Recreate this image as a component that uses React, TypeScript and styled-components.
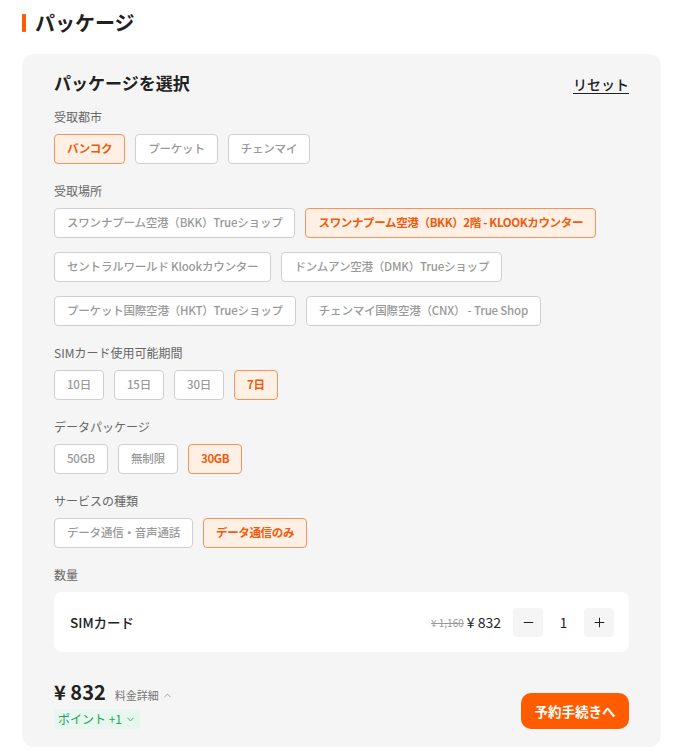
import styled, { createGlobalStyle } from "styled-components"
import { ChevronDown, ChevronUp, Minus, Plus } from "lucide-react"

const GlobalStyle = createGlobalStyle`
  body {
    margin: 0;
    background: #fff;
    font-family: "Noto Sans CJK JP", "Noto Sans", sans-serif;
    color: #212121;
  }
`

const Page = styled.div`
  padding: 12px 18px 8px 22px;
`

const Heading = styled.h2`
  display: flex;
  align-items: center;
  gap: 9px;
  margin: 0 0 20px;
  font-size: 20px;
  line-height: 22px;
  font-weight: 700;
  color: #212121;

  &::before {
    content: "";
    width: 4px;
    height: 18px;
    border-radius: 1px;
    background: #ff5b00;
  }
`

const Panel = styled.div`
  background: #f5f5f5;
  border-radius: 12px;
  padding: 17px 32px 18px;
`

const PanelHead = styled.div`
  display: flex;
  justify-content: space-between;
  align-items: center;
  margin-bottom: 13px;
`

const PanelTitle = styled.h3`
  margin: 0;
  font-size: 17px;
  line-height: 24px;
  font-weight: 700;
  color: #212121;
`

const Reset = styled.a`
  font-size: 14px;
  line-height: 20px;
  font-weight: 500;
  color: #212121;
  text-decoration: underline;
  text-underline-offset: 3px;
  margin-top: 2px;
`

const Section = styled.div`
  margin-bottom: 18px;
`

const Label = styled.div`
  font-size: 12px;
  line-height: 18px;
  color: #666;
  margin-bottom: 8px;
`

const Options = styled.div`
  display: flex;
  flex-wrap: wrap;
  gap: 14px 10px;
`

const Option = styled.button<{ $active?: boolean }>`
  height: 30px;
  padding: 0 12px;
  border-radius: 4px;
  border: 1px solid ${(p) => (p.$active ? "#f3925a" : "#cfcfcf")};
  background: ${(p) => (p.$active ? "#fff0e6" : "#fff")};
  color: ${(p) => (p.$active ? "#f05a0a" : "#999")};
  font-family: inherit;
  font-size: 11.5px;
  font-weight: ${(p) => (p.$active ? 700 : 500)};
  letter-spacing: ${(p) => (p.$active ? "-0.35px" : "-0.2px")};
  line-height: 1;
  white-space: nowrap;
`

const QtyCard = styled.div`
  display: flex;
  align-items: center;
  height: 60px;
  padding: 0 15px 0 16px;
  background: #fff;
  border-radius: 8px;
`

const QtyName = styled.div`
  flex: 1;
  font-size: 13.5px;
  font-weight: 500;
  color: #212121;
`

const OldPrice = styled.span`
  font-size: 10px;
  color: #999;
  text-decoration: line-through;
  margin-right: 3px;
`

const NowPrice = styled.span`
  font-size: 14px;
  color: #212121;
  margin-right: 12px;
`

const StepButton = styled.button`
  width: 30px;
  height: 29px;
  display: flex;
  align-items: center;
  justify-content: center;
  border: none;
  border-radius: 4px;
  background: #f5f5f5;
  color: #212121;
  padding: 0;
`

const Count = styled.span`
  width: 41px;
  text-align: center;
  font-size: 13.5px;
  color: #212121;
`

const Footer = styled.div`
  display: flex;
  justify-content: space-between;
  align-items: flex-end;
  margin-top: 29px;
`

const PriceLine = styled.div`
  display: flex;
  align-items: baseline;
  gap: 9px;
`

const Total = styled.span`
  font-size: 20px;
  line-height: 22px;
  font-weight: 700;
  color: #212121;
`

const Detail = styled.span`
  display: inline-flex;
  align-items: center;
  gap: 3px;
  font-size: 11px;
  color: #757575;
`

const Points = styled.span`
  display: inline-flex;
  align-items: center;
  gap: 3px;
  margin-top: 6px;
  height: 20px;
  padding: 0 4px;
  border-radius: 3px;
  background: #e7f7ef;
  color: #17a35d;
  font-size: 12px;
  line-height: 1;
`

const BookButton = styled.button`
  width: 108px;
  height: 36px;
  border: none;
  border-radius: 10px;
  background: #ff5b00;
  color: #fff;
  font-family: inherit;
  font-size: 13.5px;
  font-weight: 700;
`

const groups: { label: string; options: string[]; active: number }[] = [
  { label: "受取都市", options: ["バンコク", "プーケット", "チェンマイ"], active: 0 },
  {
    label: "受取場所",
    options: [
      "スワンナプーム空港（BKK）Trueショップ",
      "スワンナプーム空港（BKK）2階 - KLOOKカウンター",
      "セントラルワールド Klookカウンター",
      "ドンムアン空港（DMK）Trueショップ",
      "プーケット国際空港（HKT）Trueショップ",
      "チェンマイ国際空港（CNX） - True Shop",
    ],
    active: 1,
  },
  { label: "SIMカード使用可能期間", options: ["10日", "15日", "30日", "7日"], active: 3 },
  { label: "データパッケージ", options: ["50GB", "無制限", "30GB"], active: 2 },
  { label: "サービスの種類", options: ["データ通信・音声通話", "データ通信のみ"], active: 1 },
]

const App = () => {
  return (
    <Page>
      <GlobalStyle />
      <Heading>パッケージ</Heading>
      <Panel>
        <PanelHead>
          <PanelTitle>パッケージを選択</PanelTitle>
          <Reset>リセット</Reset>
        </PanelHead>
        {groups.map((g) => (
          <Section key={g.label}>
            <Label>{g.label}</Label>
            <Options>
              {g.options.map((o, i) => (
                <Option key={o} $active={i === g.active}>
                  {o}
                </Option>
              ))}
            </Options>
          </Section>
        ))}
        <Label>数量</Label>
        <QtyCard>
          <QtyName>SIMカード</QtyName>
          <OldPrice>¥ 1,160</OldPrice>
          <NowPrice>¥ 832</NowPrice>
          <StepButton>
            <Minus size={15} strokeWidth={1.6} />
          </StepButton>
          <Count>1</Count>
          <StepButton>
            <Plus size={15} strokeWidth={1.6} />
          </StepButton>
        </QtyCard>
        <Footer>
          <div>
            <PriceLine>
              <Total>¥ 832</Total>
              <Detail>
                料金詳細 <ChevronUp size={11} strokeWidth={1.5} />
              </Detail>
            </PriceLine>
            <Points>
              ポイント +1 <ChevronDown size={11} strokeWidth={1.8} />
            </Points>
          </div>
          <BookButton>予約手続きへ</BookButton>
        </Footer>
      </Panel>
    </Page>
  )
}

export default App
